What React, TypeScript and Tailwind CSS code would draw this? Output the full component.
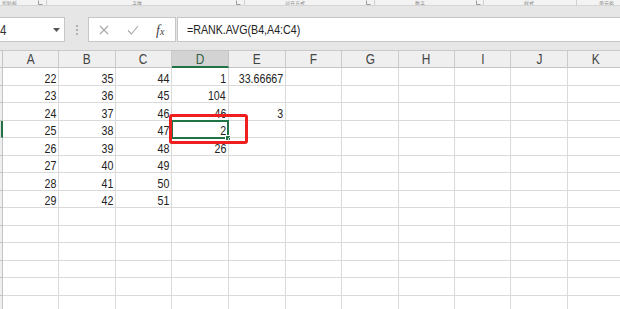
import React from "react";

const FONT = { fontFamily: '"Liberation Sans", Arial, sans-serif' };

const cols = ["A", "B", "C", "D", "E", "F", "G", "H", "I", "J", "K"];

const data: (string | null)[][] = [
  ["22", "35", "44", "1", "33.66667"],
  ["23", "36", "45", "104", null],
  ["24", "37", "46", "46", "3"],
  ["25", "38", "47", "2", null],
  ["26", "39", "48", "26", null],
  ["27", "40", "49", null, null],
  ["28", "41", "50", null, null],
  ["29", "42", "51", null, null],
];

const ROWS = 14;

function Launcher() {
  return (
    <svg width="5" height="5" viewBox="0 0 5 5" className="shrink-0">
      <path d="M0.5 0.5 V4.5 H4.5" stroke="#9a9a9a" strokeWidth="1" fill="none" />
    </svg>
  );
}

function RibbonStrip() {
  const lbl = "text-[5px] leading-[5px] text-[#8a8a8a] whitespace-nowrap";
  return (
    <div
      className="h-[6px] bg-[#f3f3f3] border-b border-[#d6d6d6] overflow-hidden flex"
      style={{ fontFamily: '"Noto Sans CJK SC", sans-serif' }}
    >
      <div className="w-[47px] shrink-0 flex items-start border-r border-[#d0d0d0]">
        <span className={`${lbl} ml-[2px]`}>剪贴板</span>
        <span className="ml-auto mr-[3px]"><Launcher /></span>
      </div>
      <div className="w-[198px] shrink-0 flex items-start border-r border-[#d0d0d0]">
        <span className={`${lbl} ml-[85px]`}>字体</span>
        <span className="ml-auto mr-[3px]"><Launcher /></span>
      </div>
      <div className="w-[130px] shrink-0 flex items-start border-r border-[#d0d0d0]">
        <span className={`${lbl} ml-[40px]`}>对齐方式</span>
        <span className="ml-auto mr-[3px]"><Launcher /></span>
      </div>
      <div className="w-[109px] shrink-0 flex items-start border-r border-[#d0d0d0]">
        <span className={`${lbl} ml-[40px]`}>数字</span>
        <span className="ml-auto mr-[2px]"><Launcher /></span>
      </div>
      <div className="w-[93px] shrink-0 flex items-start border-r border-[#d0d0d0]">
        <span className={`${lbl} ml-[40px]`}>样式</span>
      </div>
      <div className="flex-1 flex items-start">
        <span className={`${lbl} ml-[22px]`}>单元格</span>
      </div>
    </div>
  );
}

function FormulaBar() {
  return (
    <div className="h-[44px] bg-[#e6e6e6] pt-[11px] flex items-start">
      {/* Name box */}
      <div className="w-[65px] h-[25px] bg-white border border-l-0 border-[#c6c6c6] flex items-center shrink-0">
        <span className="inline-block origin-left scale-x-[0.82] text-[14px] text-[#333] leading-none">4</span>
        <svg width="7" height="4" viewBox="0 0 7 4" className="ml-auto mr-[4px]">
          <path d="M0 0 H7 L3.5 4 Z" fill="#555" />
        </svg>
      </div>
      {/* dots */}
      <div className="w-[23px] h-[25px] flex flex-col items-center justify-center gap-[2px] shrink-0">
        <span className="w-[2px] h-[2px] bg-[#b0b0b0]" />
        <span className="w-[2px] h-[2px] bg-[#b0b0b0]" />
        <span className="w-[2px] h-[2px] bg-[#b0b0b0]" />
      </div>
      {/* cancel / enter / fx */}
      <div className="w-[88px] h-[25px] bg-white border border-[#c6c6c6] flex items-center shrink-0">
        <svg width="10" height="10" viewBox="0 0 10 10" className="ml-[10px]">
          <path d="M1 1 L9 9 M9 1 L1 9" stroke="#a8a8a8" strokeWidth="1.1" />
        </svg>
        <svg width="12" height="10" viewBox="0 0 12 10" className="ml-[18px]">
          <path d="M1 5.5 L4.5 9 L11 1" stroke="#a8a8a8" strokeWidth="1.1" fill="none" />
        </svg>
        <span className="ml-[17px] italic text-[#444] leading-none" style={{ fontFamily: '"Liberation Serif", serif' }}>
          <span className="text-[14px]">f</span>
          <span className="text-[10px]">x</span>
        </span>
      </div>
      {/* formula input */}
      <div className="flex-1 h-[25px] bg-white border border-r-0 border-[#c6c6c6] ml-[1px] flex items-center">
        <span className="ml-[9px] inline-block origin-left scale-x-[0.82] text-[13px] text-[#222] leading-none whitespace-nowrap">
          =RANK.AVG(B4,A4:C4)
        </span>
      </div>
    </div>
  );
}

export default function App() {
  return (
    <div className="w-[620px] h-[309px] overflow-hidden bg-white" style={FONT}>
      <RibbonStrip />
      <FormulaBar />
      <div className="relative">
        <div className="grid grid-cols-[3px_56px_57px_56px_57px_57px_56px_57px_56px_56px_57px_57px] w-[625px]">
          {/* header row */}
          <div className="h-[18px] bg-[#efefef] border-t border-b border-r border-[#c4c4c4]" />
          {cols.map((c) => (
            <div
              key={c}
              className={
                c === "D"
                  ? "h-[18px] bg-[#d3d3d3] border-t border-[#c4c4c4] border-r border-r-[#c4c4c4] border-b-2 border-b-[#217346] flex items-center justify-center text-[14px] leading-none text-[#2f5f3f]"
                  : "h-[18px] bg-[#efefef] border-t border-b border-r border-[#cacaca] border-b-[#c4c4c4] flex items-center justify-center text-[14px] leading-none text-[#444]"
              }
            >
              <span className="inline-block scale-x-[0.85]">{c}</span>
            </div>
          ))}
          {/* body rows */}
          {Array.from({ length: ROWS }).map((_, r) => (
            <React.Fragment key={r}>
              <div
                className={
                  r === 3
                    ? "h-[17.5px] bg-[#e0e0e0] border-b border-[#c4c4c4] border-r-2 border-r-[#217346]"
                    : "h-[17.5px] bg-[#efefef] border-b border-r border-[#c4c4c4]"
                }
              />
              {cols.map((c, ci) => {
                const v = data[r] ? data[r][ci] ?? null : null;
                const selected = r === 3 && c === "D";
                return (
                  <div
                    key={c}
                    className="h-[17.5px] border-b border-r border-[#dadada] flex items-end justify-end pr-[2px] text-[13px] leading-[12px] text-[#222] relative"
                  >
                    {v && <span className="inline-block origin-right scale-x-[0.82]">{v}</span>}
                    {selected && (
                      <div className="absolute -top-[1px] -left-[1px] -right-[1px] -bottom-[2px] border-2 border-[#217346]">
                        <div className="absolute -right-[4px] -bottom-[4px] w-[6px] h-[6px] bg-[#217346] border border-white" />
                      </div>
                    )}
                  </div>
                );
              })}
            </React.Fragment>
          ))}
        </div>
        {/* red annotation rectangle */}
        <div className="absolute left-[169px] top-[64px] w-[79px] h-[30px] border-[3px] border-[#f01f1f] rounded-[3px]" />
      </div>
    </div>
  );
}
